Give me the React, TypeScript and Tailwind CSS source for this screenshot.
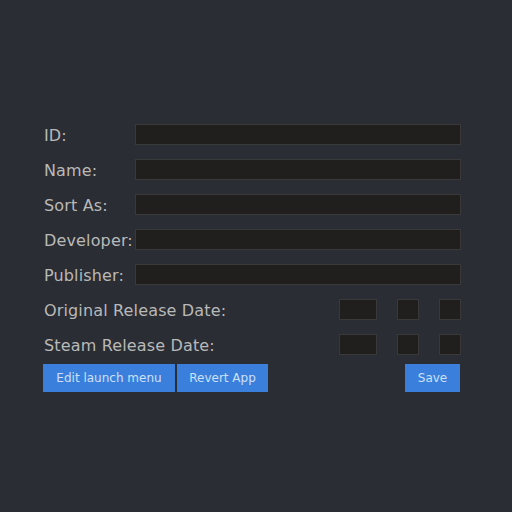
import React from "react";

const Row = ({ label }: { label: string }) => (
  <div className="flex items-center h-[21px]">
    <div className="w-[92px] shrink-0 whitespace-nowrap pl-px pt-[2px] tracking-[0.15px]">{label}</div>
    <div className="flex-1 h-[21px] bg-[#201f1d] border border-[#393939]" />
  </div>
);

const DateRow = ({ label }: { label: string }) => (
  <div className="flex items-center h-[21px]">
    <div className="flex-1 whitespace-nowrap pl-px pt-[2px] tracking-[0.15px]">{label}</div>
    <div className="w-[38px] h-[21px] bg-[#201f1d] border border-[#393939]" />
    <div className="w-[22px] h-[21px] ml-[20px] bg-[#201f1d] border border-[#393939]" />
    <div className="w-[22px] h-[21px] ml-[20px] bg-[#201f1d] border border-[#393939]" />
  </div>
);

export default function App() {
  return (
    <div
      className="w-[512px] h-[512px] bg-[#2a2d33] text-[#b9b9b9] text-[16px] pt-[124px] pl-[43px] pr-[51px]"
      style={{ fontFamily: '"DejaVu Sans", sans-serif' }}
    >
      <div className="flex flex-col gap-[14px]">
        <Row label="ID:" />
        <Row label="Name:" />
        <Row label="Sort As:" />
        <Row label="Developer:" />
        <Row label="Publisher:" />
        <DateRow label="Original Release Date:" />
        <DateRow label="Steam Release Date:" />
      </div>
      <div className="flex mt-[9px] text-[12px] text-[#cde0f7]">
        <button className="w-[132px] h-[28px] bg-[#3a7fdc] flex items-center justify-center">
          Edit launch menu
        </button>
        <button className="w-[91px] h-[28px] ml-[2px] bg-[#3a7fdc] flex items-center justify-center">
          Revert App
        </button>
        <div className="flex-1" />
        <button className="w-[55px] h-[28px] mr-px bg-[#3a7fdc] flex items-center justify-center">
          Save
        </button>
      </div>
    </div>
  );
}
